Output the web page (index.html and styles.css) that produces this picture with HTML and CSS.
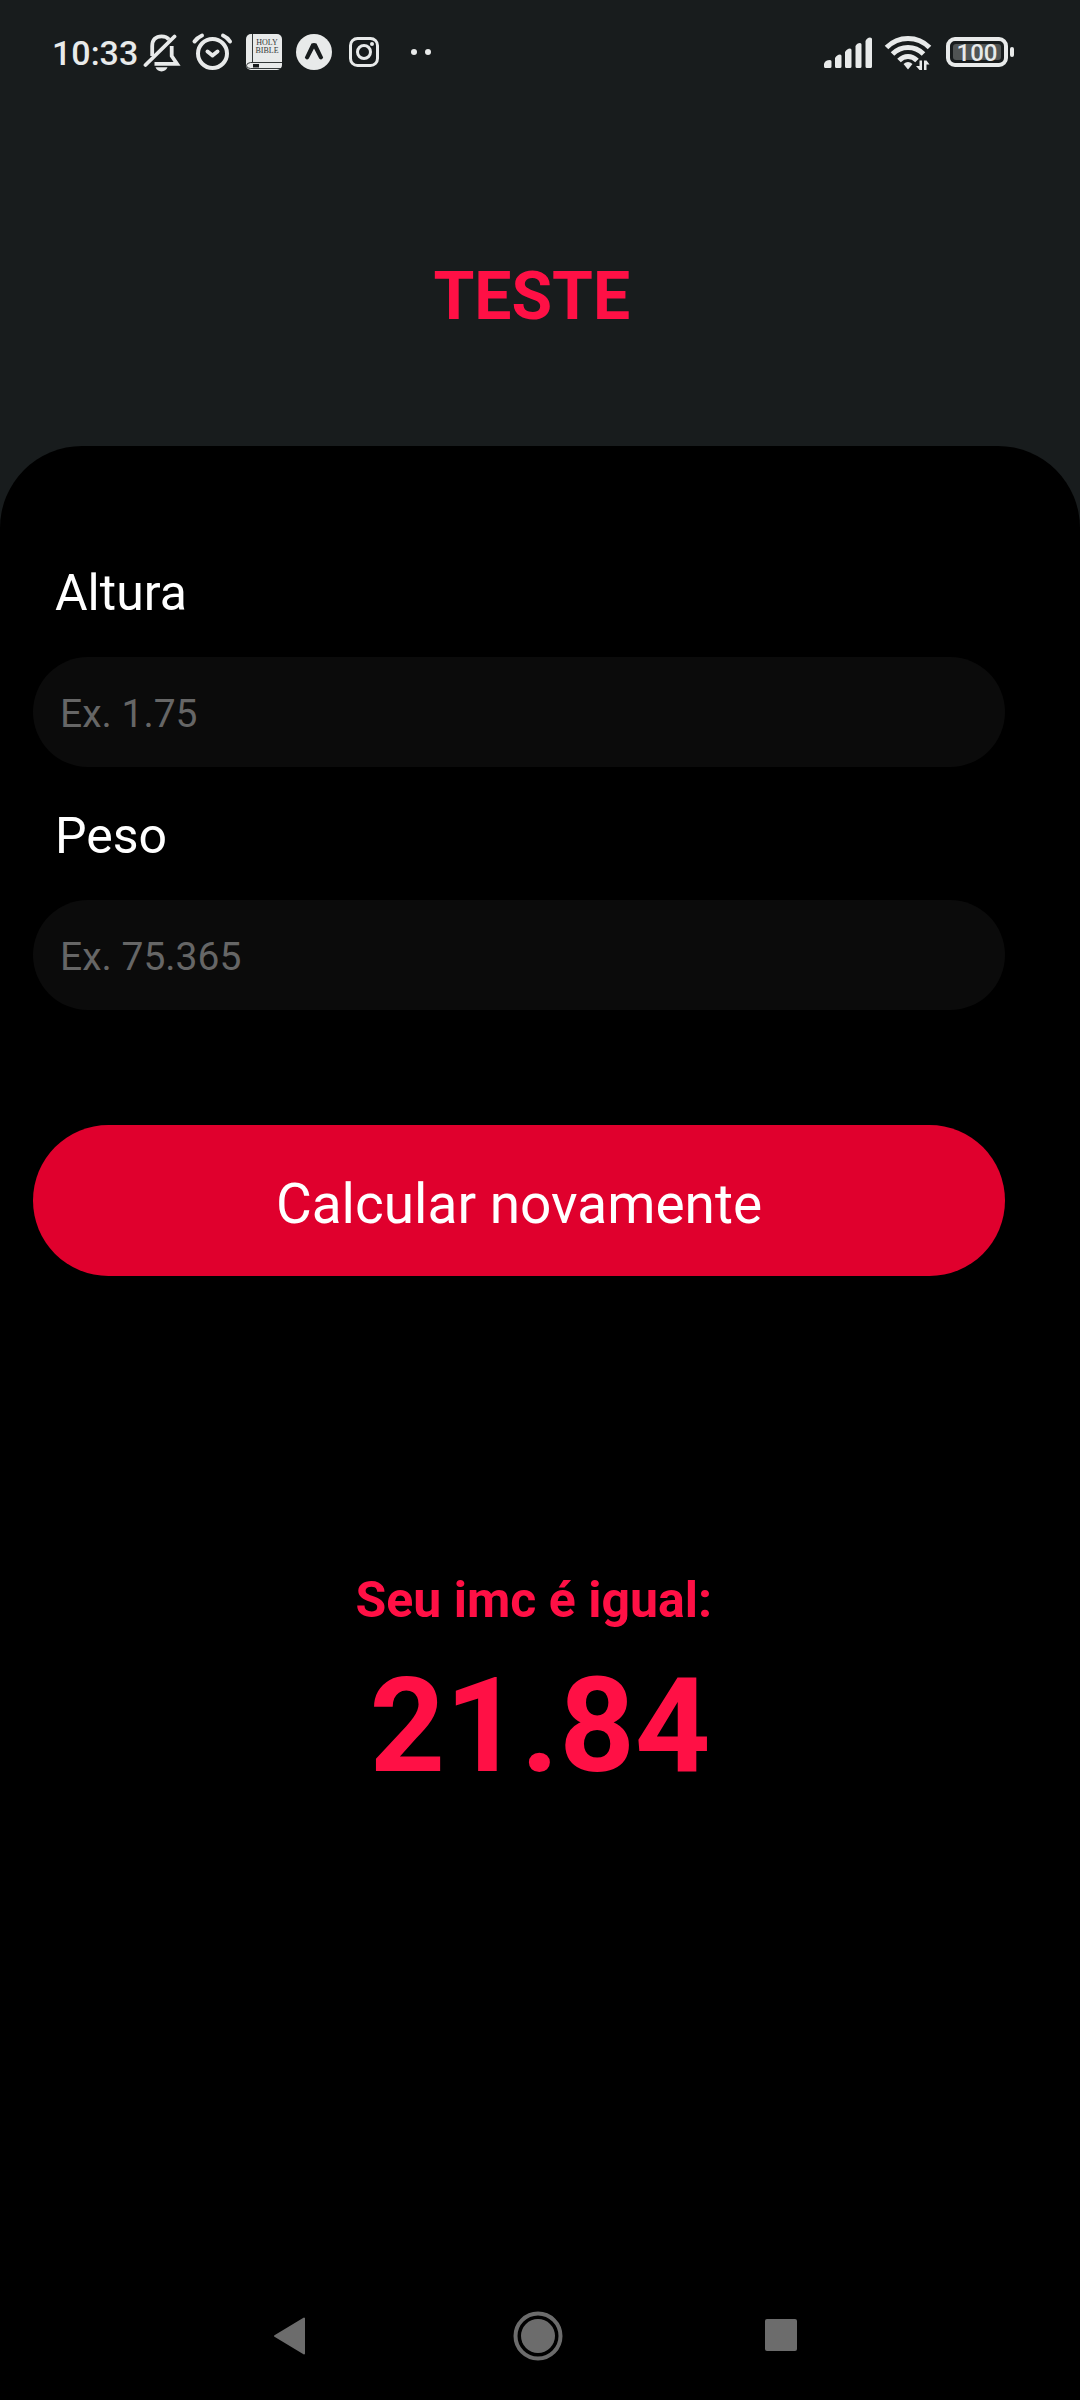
FILE: index.html
```html
<!DOCTYPE html>
<html lang="pt-BR">
<head>
<meta charset="utf-8">
<meta name="viewport" content="width=device-width, initial-scale=1">
<title>TESTE</title>
<link rel="stylesheet" href="styles.css">
</head>
<body>
<div class="statusbar">
  <div class="status-left">
    <span class="time">10:33</span>
    <div class="status-icons">
      <svg class="icon" width="38" height="44" viewBox="0 0 38 44" aria-label="Silencioso">
        <g fill="none" stroke="#e8eaea" stroke-width="3.8">
          <path d="M2.5 35 31.5 6.5" stroke-linecap="round"/>
          <path d="M9.2 26V16C9.2 9.500 13 6.300 18.500 6.300 22 6.300 24.500 7.500 26 9.500"/>
          <path d="M28.700 16V26L34 33.800H11.500"/>
        </g>
        <path fill="#e8eaea" d="M12.500 37.300H24.500C23.500 40 21.500 41.400 18.500 41.400S13.500 40 12.500 37.300Z"/>
      </svg>
      <svg class="icon" width="42" height="44" viewBox="0 0 42 44" aria-label="Alarme">
        <g fill="none" stroke="#e8eaea" stroke-width="4" stroke-linecap="round">
          <circle cx="21.500" cy="23.500" r="14.500"/>
          <path d="M16.500 21.500 21.500 25.500 26.500 21.500M3.500 11.500Q6.500 7.500 11 5.500M39 11.500Q36.500 7.500 32 5.500" stroke-linejoin="round"/>
        </g>
      </svg>
      <svg class="icon" width="42" height="44" viewBox="0 0 42 44" aria-label="Bíblia">
        <rect x="3" y="4" width="36" height="36" rx="5" fill="#e8eaea"/>
        <path d="M9.500 4V32M39 32.500H7.500Q3.500 33 3.500 35.700T7.500 38.500H38" fill="none" stroke="#333838" stroke-width="1"/>
        <path d="M10 34H16V37.500H10Z" fill="#181c1d"/>
        <text class="book-text" x="24" y="15">HOLY</text>
        <text class="book-text" x="24" y="23">BIBLE</text>
      </svg>
      <svg class="icon" width="38" height="44" viewBox="0 0 38 44" aria-label="Expo">
        <circle cx="19" cy="22" r="18" fill="#e8eaea"/>
        <path d="M16.500 13.500Q19 12.500 21.500 13.500L28.200 27.500Q26.500 31 24.200 28.500L19 18.500 13.800 28.500Q11.500 31 9.800 27.500Z" fill="#181c1d"/>
      </svg>
      <svg class="icon" width="42" height="44" viewBox="0 0 42 44" aria-label="Instagram">
        <g fill="none" stroke="#e8eaea" stroke-width="3">
          <rect x="7.500" y="8.500" width="27" height="27" rx="7"/>
          <circle cx="21" cy="22" r="6.500"/>
        </g>
        <circle cx="29" cy="14" r="2" fill="#e8eaea"/>
      </svg>
      <svg class="icon" width="42" height="44" viewBox="0 0 42 44" aria-label="Mais notificações">
        <circle cx="19" cy="22" r="3" fill="#e8eaea"/>
        <circle cx="33" cy="22" r="3" fill="#e8eaea"/>
      </svg>
    </div>
  </div>
  <div class="status-right">
    <svg class="icon" width="52" height="44" viewBox="0 0 52 44" aria-label="Sinal">
      <path fill="#e8eaea" d="M2 34Q3 30 8 30Q9.500 30 9.500 31.500V36.500Q9.500 38 8 38H3.500Q2 38 2 36.500ZM13 28Q15 24.500 18 24.500Q19.500 24.500 19.500 26V36.500Q19.500 38 18 38H14.500Q13 38 13 36.500ZM23 22Q25 18.500 28 18.500Q29.500 18.500 29.500 20V36.500Q29.500 38 28 38H24.500Q23 38 23 36.500ZM33.500 16Q35 13 38 13Q39.500 13 39.500 14.500V36.500Q39.500 38 38 38H35Q33.500 38 33.500 36.500ZM43.500 11Q45 7.500 48 7.500Q50 7.500 50 9V36.500Q50 38 48.500 38H45Q43.500 38 43.500 36.500Z"/>
    </svg>
    <svg class="icon" width="52" height="44" viewBox="0 0 52 44" aria-label="Wi-Fi">
      <g fill="none" stroke="#e8eaea" stroke-width="5">
        <path d="M4.500 17.500Q13.500 8.500 26 8.500T47.500 17.500"/>
        <path d="M10.500 24Q17 17.500 26 17.500T41.500 24"/>
        <path d="M17 30.500Q21 26.500 26 26.500T35 30.500"/>
      </g>
      <path fill="#e8eaea" d="M21.500 34Q26 30 30.500 34L26 39.500ZM34 36 37.500 40H40V30.500H37.500V36ZM42 30.500V40H44.500V34.500H47.500L44.500 30.500Z"/>
    </svg>
    <svg class="icon" width="74" height="44" viewBox="0 0 74 44" aria-label="Bateria 100%">
      <rect x="6" y="9" width="58" height="26" rx="7" fill="none" stroke="#e8eaea" stroke-width="4"/>
      <rect x="11" y="14" width="48" height="16" rx="3" fill="#505454"/>
      <rect x="68" y="17" width="4" height="10" rx="2" fill="#e8eaea"/>
      <text class="battery-text" x="35" y="31">100</text>
    </svg>
  </div>
</div>

<header class="header">
  <h1 class="title">TESTE </h1>
</header>

<main class="panel">
  <form class="form">
    <label class="label" for="altura">Altura</label>
    <input class="field" id="altura" type="text" inputmode="decimal" placeholder="Ex. 1.75">
    <label class="label" for="peso">Peso</label>
    <input class="field" id="peso" type="text" inputmode="decimal" placeholder="Ex. 75.365">
    <button class="submit" type="button">Calcular novamente</button>
  </form>
  <section class="result">
    <p class="result-label">Seu imc é igual: </p>
    <p class="result-value">21.84</p>
  </section>
  <nav class="navbar">
    <button class="nav-button" type="button" aria-label="Voltar">
      <svg class="icon" width="56" height="56" viewBox="0 0 56 56"><path d="M11 28 40 10.500V45.500Z" fill="#6c6c6c" stroke="#6c6c6c" stroke-width="2" stroke-linejoin="round"/></svg>
    </button>
    <button class="nav-button" type="button" aria-label="Início">
      <svg class="icon" width="56" height="56" viewBox="0 0 56 56"><circle cx="28" cy="28" r="22.500" fill="none" stroke="#6c6c6c" stroke-width="4"/><circle cx="28" cy="28" r="17" fill="#6c6c6c"/></svg>
    </button>
    <button class="nav-button" type="button" aria-label="Recentes">
      <svg class="icon" width="56" height="56" viewBox="0 0 56 56"><rect x="9" y="11" width="32" height="32" rx="2" fill="#6c6c6c"/></svg>
    </button>
  </nav>
</main>
</body>
</html>
```

FILE: styles.css
```css
* {
  box-sizing: border-box;
}

body {
  display: flex;
  flex-direction: column;
  min-height: 100vh;
  margin: 0;
  background: #181c1d;
  color: #fff;
  font-family: Roboto, "Liberation Sans", sans-serif;
}

.icon {
  display: block;
  flex: none;
}

/* Status bar */
.statusbar {
  display: flex;
  align-items: center;
  justify-content: space-between;
  height: 104px;
  padding: 0 64px 0 52px;
}

.status-left {
  display: flex;
  align-items: center;
  gap: 5px;
}

.status-icons {
  display: flex;
  gap: 10px;
}

.status-right {
  display: flex;
  gap: 8px;
}

.time {
  padding-top: 2px;
  color: #e8eaea;
  font-size: 34px;
  font-weight: 500;
  line-height: 40px;
}

.book-text {
  fill: #333838;
  font-family: "Liberation Serif", serif;
  font-size: 8px;
  text-anchor: middle;
}

.battery-text {
  fill: #e8eaea;
  font-size: 24px;
  font-weight: 500;
  text-anchor: middle;
}

/* Title */
.header {
  padding: 154px 0 110px;
}

.title {
  margin: 0;
  color: #ff1045;
  font-size: 66px;
  font-weight: 700;
  line-height: 78px;
  text-align: center;
  white-space: pre;
}

/* Form */
.panel {
  display: flex;
  flex: 1;
  flex-direction: column;
  padding-top: 117px;
  border-radius: 82px 82px 0 0;
  background: #000;
}

.form {
  display: flex;
  flex-direction: column;
  width: 90%;
  margin-left: 33px;
}

.label {
  padding-left: 22px;
  font-size: 50px;
  line-height: 60px;
}

.field {
  width: 100%;
  height: 110px;
  margin: 34px 0 39px;
  padding: 4px 27px 0;
  border: 0;
  border-radius: 55px;
  background: #0b0b0b;
  color: #fff;
  font-family: inherit;
  font-size: 39px;
}

.field::placeholder {
  color: #666;
  opacity: 1;
}

.submit {
  height: 151px;
  margin-top: 76px;
  padding: 6px 0 0;
  border: 0;
  border-radius: 76px;
  background: #e0002d;
  color: #fff;
  font-family: inherit;
  font-size: 55px;
}

/* Result */
.result {
  display: flex;
  flex-direction: column;
  gap: 18px;
  margin-top: 294px;
  color: #ff1045;
  font-weight: 700;
  text-align: center;
  white-space: pre;
}

.result-label {
  margin: 0;
  font-size: 50px;
  line-height: 60px;
}

.result-value {
  margin: 0;
  font-size: 132px;
  line-height: 156px;
}

/* System navigation */
.navbar {
  display: flex;
  align-items: center;
  justify-content: center;
  gap: 190px;
  height: 128px;
  margin-top: auto;
  padding-right: 4px;
}

.nav-button {
  padding: 0;
  border: 0;
  background: none;
}
```
